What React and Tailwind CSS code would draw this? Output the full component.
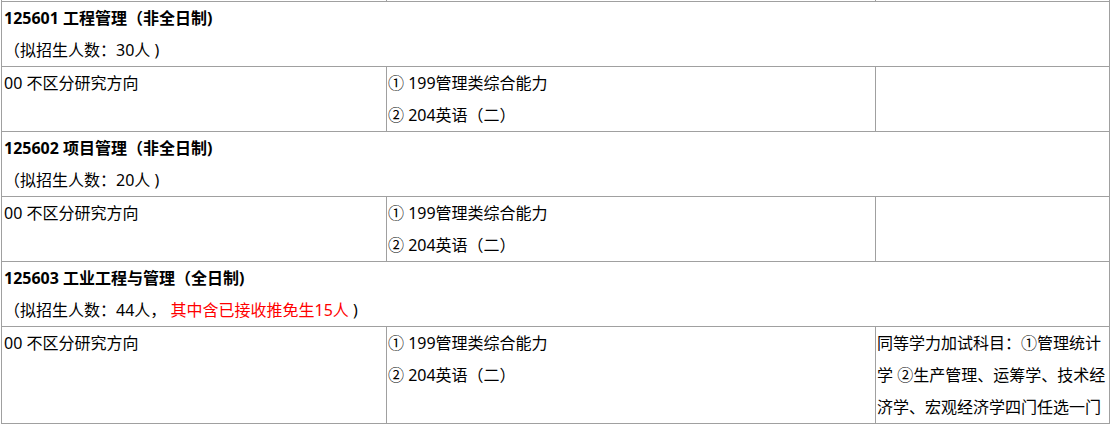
export default function App() {
  const majors = [
    {
      title: '125601 工程管理（非全日制)',
      plan: '30人',
      note: null,
      remark: null,
      lines: 2,
    },
    {
      title: '125602 项目管理（非全日制)',
      plan: '20人',
      note: null,
      remark: null,
      lines: 2,
    },
    {
      title: '125603 工业工程与管理（全日制)',
      plan: '44人，',
      note: '其中含已接收推免生15人',
      remark: '同等学力加试科目：①管理统计学 ②生产管理、运筹学、技术经济学、宏观经济学四门任选一门',
      lines: 3,
    },
  ];

  return (
    <div
      className="bg-white min-h-screen text-[16px] leading-[32px] text-black"
      style={{ fontFamily: '"Noto Sans", "Noto Sans CJK SC", sans-serif' }}
    >
      <div className="ml-[1px] w-[1109px] border-r border-[#a0a0a0] grid grid-cols-[385px_489px_234px]">
        {/* tail of the previous row */}
        <div className="h-[2px] border-l border-b border-[#a0a0a0]"></div>
        <div className="h-[2px] border-l border-b border-[#a0a0a0]"></div>
        <div className="h-[2px] border-l border-b border-[#a0a0a0]"></div>

        {majors.map(m => (
          <div key={m.title} className="contents">
            <div className="col-span-3 h-[65px] border-l border-b border-[#a0a0a0] pl-[2px]">
              <div className="font-bold">{m.title}</div>
              <div>
                （拟招生人数：{m.plan}
                {m.note && <span className="text-[#ff0000]"> {m.note}</span>} )
              </div>
            </div>
            <div
              className={`border-l border-b border-[#a0a0a0] pl-[2px] ${m.lines === 3 ? 'h-[97px]' : 'h-[65px]'}`}
            >
              00 不区分研究方向
            </div>
            <div className="border-l border-b border-[#a0a0a0] pl-[1px]">
              <div>① 199管理类综合能力</div>
              <div>② 204英语（二）</div>
            </div>
            <div className="border-l border-b border-[#a0a0a0] pl-[1px] pr-[1px]">
              {m.remark}
            </div>
          </div>
        ))}
      </div>
    </div>
  );
}
